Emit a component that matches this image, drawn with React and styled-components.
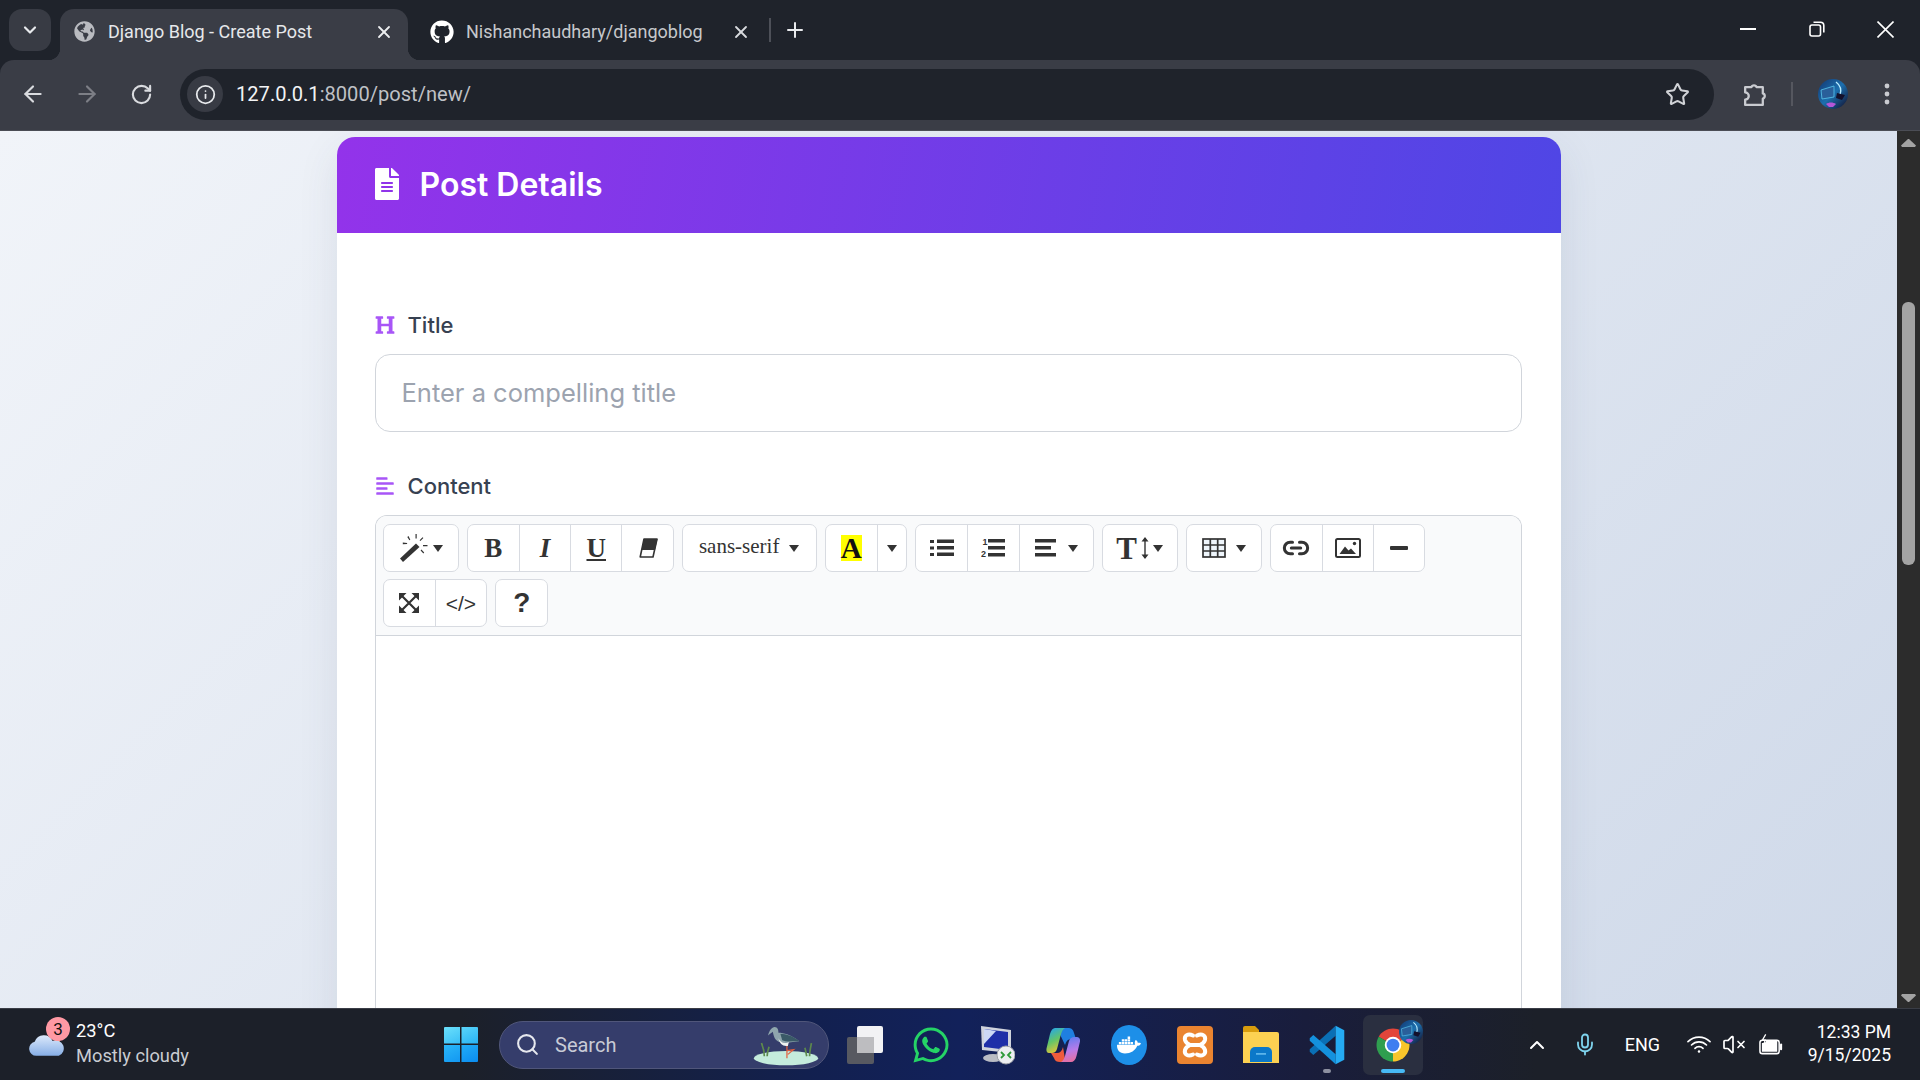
import React from "react";
import styled, { createGlobalStyle } from "styled-components";
import { ArrowLeft, ArrowRight, RotateCw, Star, X, Plus, ChevronDown, ChevronUp, Mic, Info, Search as SearchGlyph, Link2, VolumeX } from "lucide-react";
import { FaFileAlt, FaHeading, FaAlignLeft, FaGithub, FaGlobeAmericas, FaWhatsapp, FaDocker } from "react-icons/fa";

const GlobalStyle = createGlobalStyle`
    html, body {
        margin: 0;
        height: 100%;
        overflow: hidden;
        background: #1f232b;
    }
    * {
        box-sizing: border-box;
    }
`;

const uiFont = `Roboto, "Open Sans", sans-serif`;
const pageFont = `Inter, "Liberation Sans", sans-serif`;

const Screen = styled.div`
    width: 1920px;
    height: 1080px;
    display: flex;
    flex-direction: column;
    overflow: hidden;
    font-family: ${uiFont};
`;

/* browser chrome */
const TabStrip = styled.div`
    height: 60px;
    flex: none;
    display: flex;
    align-items: flex-end;
    background: #1f232b;
    padding-left: 9px;
`;

const TabMenu = styled.div`
    width: 42px;
    height: 42px;
    margin-bottom: 9px;
    margin-right: 9px;
    border-radius: 13px;
    background: #383b44;
    color: #e8eaed;
    display: flex;
    align-items: center;
    justify-content: center;
`;

const Tab = styled.div`
    position: relative;
    width: ${(p) => p.$w}px;
    height: 51px;
    padding: 0 ${(p) => p.$padRight}px 6px ${(p) => p.$pad}px;
    display: flex;
    align-items: center;
    gap: ${(p) => p.$gap}px;
    border-radius: 14px 14px 0 0;
    background: ${(p) => (p.$active ? "#3a3d46" : "transparent")};
    color: ${(p) => (p.$active ? "#e6e8eb" : "#c6c8cc")};
    font-size: 18px;
    white-space: nowrap;

    ${(p) =>
        p.$active &&
        `
        &::before, &::after {
            content: "";
            position: absolute;
            bottom: 0;
            width: 12px;
            height: 12px;
        }
        &::before {
            left: -12px;
            background: radial-gradient(circle at 0 0, transparent 12px, #3a3d46 12.5px);
        }
        &::after {
            right: -12px;
            background: radial-gradient(circle at 100% 0, transparent 12px, #3a3d46 12.5px);
        }
    `}
`;

const TabTitle = styled.span`
    flex: 1;
`;

const TabDivider = styled.div`
    width: 2px;
    height: 24px;
    margin: 0 0 18px 8px;
    background: #4d5058;
`;

const NewTab = styled.div`
    width: 48px;
    height: 42px;
    margin-bottom: 9px;
    color: #e8eaed;
    display: flex;
    align-items: center;
    justify-content: center;
`;

const WindowControls = styled.div`
    margin-left: auto;
    align-self: stretch;
    display: flex;
`;

const WindowButton = styled.div`
    width: 69px;
    height: 58px;
    display: flex;
    align-items: center;
    justify-content: center;
    color: #fff;
`;

const NavBar = styled.div`
    height: 71px;
    flex: none;
    display: flex;
    align-items: center;
    padding: 0 11px 2px 6px;
    background: #3a3d46;
    border-bottom: 1px solid #4b4d55;
    border-radius: 14px 14px 0 0;
`;

const NavButton = styled.div`
    width: 54px;
    height: 44px;
    display: flex;
    align-items: center;
    justify-content: center;
    color: ${(p) => (p.$muted ? "#7d7f86" : "#d9dbdf")};
`;

const Omnibox = styled.div`
    flex: 1;
    height: 51px;
    margin-left: 12px;
    padding: 0 24px 0 7px;
    border-radius: 26px;
    background: #1f232b;
    display: flex;
    align-items: center;
    gap: 13px;
    color: #bfc1c6;
    font-size: 20.1px;
`;

const InfoChip = styled.div`
    width: 36px;
    height: 36px;
    border-radius: 50%;
    background: #383b44;
    color: #e8eaed;
    display: flex;
    align-items: center;
    justify-content: center;
`;

const Url = styled.div`
    flex: 1;
    b {
        font-weight: 400;
        color: #f2f3f5;
    }
`;

const NavIcon = styled.div`
    width: 44px;
    height: 44px;
    margin-left: ${(p) => p.$ml || 0}px;
    display: flex;
    align-items: center;
    justify-content: center;
    color: #c9cbd0;
`;

const NavDivider = styled.div`
    width: 2px;
    height: 24px;
    margin-left: 15px;
    background: #55575f;
`;

/* page */
const Viewport = styled.div`
    flex: 1;
    min-height: 0;
    display: flex;
`;

const Page = styled.main`
    flex: 1;
    min-width: 0;
    overflow: hidden;
    padding-top: 6px;
    background: linear-gradient(135deg, #f1f4f9 0%, #cfd9e9 100%);
    font-family: ${pageFont};
`;

const Card = styled.section`
    width: 1224px;
    margin: 0 auto;
    background: #fff;
    border-radius: 18px 18px 0 0;
    box-shadow: 0 14px 40px rgba(60, 70, 100, 0.1);
`;

const CardHeader = styled.header`
    height: 96px;
    padding: 0 38px 2px;
    display: flex;
    align-items: center;
    gap: 21px;
    border-radius: 18px 18px 0 0;
    background: linear-gradient(100deg, #9333ea 0%, #4f46e5 100%);
    color: #fff;
    svg {
        width: 24px;
        height: 32px;
    }
`;

const CardTitle = styled.h2`
    margin: 0;
    font-size: 32px;
    font-weight: 600;
`;

const CardBody = styled.div`
    padding: 76px 39px 0 38px;
`;

const Field = styled.div`
    margin-bottom: 38px;
`;

const Label = styled.label`
    height: 32px;
    margin-bottom: 13px;
    display: flex;
    align-items: center;
    gap: 13px;
    font-size: 22px;
    font-weight: 500;
    color: #374151;
    svg {
        color: #a855f7;
        width: 20px;
        flex: none;
    }
`;

const TitleInput = styled.input`
    width: 100%;
    height: 78px;
    padding: 0 26px 1px;
    border: 1.5px solid #d1d5db;
    border-radius: 15px;
    font-family: inherit;
    font-size: 25.5px;
    color: #374151;
    outline: none;
    &::placeholder {
        color: #9ca3af;
    }
`;

const Editor = styled.div`
    border: 1.5px solid #d1d5db;
    border-bottom: 0;
    border-radius: 12px 12px 0 0;
    overflow: hidden;
`;

const EditorToolbar = styled.div`
    padding: 8px 8px 8px 7px;
    display: flex;
    flex-wrap: wrap;
    gap: 7px 8px;
    background: #f9fafb;
    border-bottom: 1.5px solid #d1d5db;
`;

const BtnGroup = styled.div`
    height: 48px;
    display: flex;
    background: #fff;
    border: 1.5px solid #d8dbe1;
    border-radius: 7px;
    overflow: hidden;
`;

const Btn = styled.div`
    width: ${(p) => p.$w || 51.3}px;
    height: 100%;
    display: flex;
    align-items: center;
    justify-content: center;
    gap: ${(p) => p.$gap || 0}px;
    color: #333;
    font-family: "Liberation Serif", serif;
    & + & {
        border-left: 1.5px solid #d8dbe1;
    }
`;

const Caret = styled.span`
    width: 0;
    height: 0;
    border-left: 5px solid transparent;
    border-right: 5px solid transparent;
    border-top: 7px solid #333;
`;

const Glyph = styled.span`
    font-family: ${(p) => (p.$sans ? '"Liberation Sans", sans-serif' : '"Liberation Serif", serif')};
    font-size: ${(p) => p.$size || 27}px;
    font-weight: ${(p) => (p.$thin ? 400 : 700)};
    font-style: ${(p) => (p.$italic ? "italic" : "normal")};
    text-decoration: ${(p) => (p.$under ? "underline" : "none")};
    text-decoration-thickness: 2px;
    text-underline-offset: 2px;
    line-height: 1;
    color: #333;
`;

const FontName = styled.span`
    font-size: 21px;
    margin-top: -4px;
`;

const HighlightA = styled.span`
    width: 21px;
    height: 26px;
    background: #ff0;
    color: #111;
    font-family: "Liberation Serif", serif;
    font-weight: 700;
    font-size: 29px;
    line-height: 26px;
    text-align: center;
`;

const EditorBody = styled.div`
    height: 700px;
    background: #fff;
`;

/* scrollbar */
const ScrollTrack = styled.div`
    width: 23px;
    flex: none;
    padding-top: 8px;
    padding-bottom: 6px;
    display: flex;
    flex-direction: column;
    align-items: center;
    background: #2c2c2c;
`;

const ScrollThumb = styled.div`
    width: 13px;
    height: 263px;
    margin-top: 155px;
    margin-bottom: auto;
    border-radius: 6px;
    background: #a3a3a3;
`;

/* taskbar */
const Taskbar = styled.footer`
    height: 72px;
    flex: none;
    display: flex;
    align-items: center;
    padding-right: 29px;
    border-top: 1px solid #3a3d46;
    background: linear-gradient(90deg, #1c2029 0%, #1c2029 24%, #12204f 42%, #12215a 50%, #191d3c 68%, #1c2029 80%, #1c2029 100%);
    color: #fff;
`;

const Weather = styled.div`
    position: relative;
    width: 444px;
    flex: none;
    padding: 0 0 2px 28px;
    display: flex;
    align-items: center;
    gap: 10px;
`;

const WeatherBadge = styled.span`
    position: absolute;
    left: 46px;
    top: -3px;
    width: 24px;
    height: 24px;
    border-radius: 50%;
    background: #ff99a4;
    color: #111;
    font-size: 17px;
    line-height: 24px;
    text-align: center;
`;

const WeatherText = styled.div`
    display: flex;
    flex-direction: column;
    gap: 3px;
    font-size: 18.3px;
    line-height: 22px;
`;

const WeatherNote = styled.span`
    color: #c9ccd2;
`;

const StartButton = styled.div`
    width: 34px;
    margin-right: 21px;
    flex: none;
    display: flex;
`;

const SearchBox = styled.div`
    position: relative;
    width: 330px;
    height: 48px;
    margin-right: 3px;
    flex: none;
    padding-left: 15px;
    display: flex;
    align-items: center;
    gap: 15px;
    border-radius: 24px;
    border: 1px solid #50567a;
    background: #353d6b;
    color: #c8cbd6;
    font-size: 20px;
`;

const SearchBird = styled.div`
    position: absolute;
    right: 9px;
    top: 0;
    display: flex;
`;

const Dock = styled.div`
    display: flex;
`;

const DockItem = styled.div`
    position: relative;
    width: 66px;
    height: 60px;
    display: flex;
    align-items: center;
    justify-content: center;

    ${(p) =>
        p.$active &&
        `
        &::before {
            content: "";
            position: absolute;
            inset: 0 3px;
            border-radius: 7px;
            background: #2a2f40;
        }
        &::after {
            content: "";
            position: absolute;
            left: 21px;
            bottom: 2px;
            width: 24px;
            height: 4px;
            border-radius: 2px;
            background: #47b9f5;
        }
    `}
    ${(p) =>
        p.$open &&
        `
        &::after {
            content: "";
            position: absolute;
            left: 29px;
            bottom: 2px;
            width: 8px;
            height: 4px;
            border-radius: 2px;
            background: #8d90a0;
        }
    `}
    > * {
        position: relative;
    }
`;

const DockAvatar = styled.div`
    position: absolute !important;
    right: 3px;
    top: 5px;
    display: flex;
`;

const DockerBadge = styled.div`
    width: 36px;
    height: 40px;
    border-radius: 50%;
    background: #1d8fe8;
    color: #fff;
    display: flex;
    align-items: center;
    justify-content: center;
`;

const XamppTile = styled.div`
    width: 36px;
    height: 38px;
    border-radius: 4px;
    background: #ea8430;
    display: flex;
    align-items: center;
    justify-content: center;
`;

const Tray = styled.div`
    margin-left: auto;
    display: flex;
    align-items: center;
`;

const TrayIcon = styled.div`
    width: 24px;
    height: 24px;
    margin-right: ${(p) => p.$mr}px;
    display: flex;
    align-items: center;
    justify-content: center;
    color: ${(p) => p.$color || "#fff"};
`;

const TrayLabel = styled.div`
    width: 36px;
    margin-right: 26px;
    font-size: 18px;
    white-space: nowrap;
`;

const Clock = styled.div`
    display: flex;
    flex-direction: column;
    align-items: flex-end;
    font-size: 17.5px;
    line-height: 23px;
    margin-top: -1px;
`;

function ArrowUpDown({ down }) {
    return (
        <svg width="15" height="8" viewBox="0 0 15 8" fill="#a3a3a3">
            <path d={down ? "M0 1.5 1 0H14l1 1.5L8 8H7Z" : "M0 6.5 1 8H14l1-1.5L8 0H7Z"} />
        </svg>
    );
}

function Restore() {
    return (
        <svg width="16" height="16" viewBox="0 0 16 16" fill="none" stroke="#fff" strokeWidth="1.6">
            <rect x="1" y="4" width="10.5" height="11" rx="2" />
            <path d="M4.5 1.2h7a3.3 3.3 0 0 1 3.3 3.3v7" />
        </svg>
    );
}

function Puzzle() {
    return (
        <svg width="27" height="27" viewBox="0 0 26 26" fill="none" stroke="currentColor" strokeWidth="2.2">
            <path d="M4 6h6a2.6 2.6 0 0 1 5 0h6v6a2.6 2.6 0 0 1 0 5v6H4v-5a3.4 3.4 0 0 0 0-7Z" strokeLinejoin="round" />
        </svg>
    );
}

function Dots() {
    return (
        <svg width="6" height="24" viewBox="0 0 6 24" fill="#c9cbd0">
            <circle cx="3" cy="4" r="2.4" />
            <circle cx="3" cy="12" r="2.4" />
            <circle cx="3" cy="20" r="2.4" />
        </svg>
    );
}

function Avatar({ size, id }) {
    return (
        <svg width={size} height={size} viewBox="0 0 30 30">
            <defs>
                <linearGradient id={id} x1="0" y1="0" x2="1" y2="1">
                    <stop offset="0" stopColor="#12356f" />
                    <stop offset="0.5" stopColor="#1c6fae" />
                    <stop offset="1" stopColor="#120c28" />
                </linearGradient>
            </defs>
            <circle cx="15" cy="15" r="15" fill={`url(#${id})`} />
            <path d="M3 11 16 7v11L4 20Z" fill="#2a5f9a" stroke="#5cc8ee" strokeWidth="0.8" />
            <path d="M18 3c4 3 6 7 4 13" stroke="#b9ecff" strokeWidth="1.4" fill="none" />
            <path d="M19 14l8 2-3 5-6-2Z" fill="#14102b" />
            <path d="M8 25c3-2 7-2 10 0l-3 3h-4Z" fill="#b457d8" />
        </svg>
    );
}

function Wand() {
    return (
        <svg width="30" height="28" viewBox="0 0 30 28" fill="#333">
            <path d="M1 24.5 17 9.5l3.500 3.500L4 28Z" />
            <path d="M9.500 2l1.800 3.800-.9.500L8.300 3ZM16.500 0h1.200v4.600h-1.200ZM3.800 8.600l4.300.3v1.100l-4.300.2ZM23.500 3.200l.9.800-3 3-.8-.8ZM24 11h4.500v1.200H24ZM21.600 16.400l.8-.8 2.800 3-.8.800Z" />
        </svg>
    );
}

function Eraser() {
    return (
        <svg width="20" height="20" viewBox="0 0 20 20">
            <path d="M6 1h13l-4 18H2.200Z" fill="#fff" stroke="#333" strokeWidth="1.6" strokeLinejoin="round" />
            <path d="M6 1h13.500l-2.500 11H3.500Z" fill="#333" />
        </svg>
    );
}

function BulletList() {
    return (
        <svg width="24" height="20" viewBox="0 0 24 20" fill="#333">
            <path d="M0 2h4v3H0ZM7 1.500h17v3.500H7ZM0 8.500h4v3H0ZM7 8h17v3.500H7ZM0 15h4v3H0ZM7 14.500h17V18H7Z" />
        </svg>
    );
}

function NumberList() {
    return (
        <svg width="24" height="22" viewBox="0 0 24 22" fill="#333">
            <text x="1.500" y="8" fontFamily="Liberation Sans" fontSize="9" fontWeight="700">1</text>
            <text x="0" y="20" fontFamily="Liberation Sans" fontSize="9" fontWeight="700">2</text>
            <path d="M7 2h17v3.500H7ZM7 9h17v3.500H7ZM7 16h17v3.500H7Z" />
        </svg>
    );
}

function AlignBars() {
    return (
        <svg width="22" height="18" viewBox="0 0 22 18" fill="#333">
            <path d="M0 0h21v3.400H0ZM0 7h16v3.400H0ZM0 14h21v3.400H0Z" />
        </svg>
    );
}

function UpDownArrow() {
    return (
        <svg width="8" height="22" viewBox="0 0 8 22" fill="#333" stroke="#333">
            <path d="M4 2v18" strokeWidth="1.4" />
            <path d="M4 0 7.500 4.500H.500ZM4 22 .500 17.500h7Z" stroke="none" />
        </svg>
    );
}

function TableGrid() {
    return (
        <svg width="24" height="20" viewBox="0 0 24 20" fill="#eef5fb" stroke="#333" strokeWidth="1.7">
            <rect x="1" y="1" width="22" height="18" />
            <path d="M8.300 1v18M15.700 1v18M1 7h22M1 13h22" fill="none" />
        </svg>
    );
}

function Picture() {
    return (
        <svg width="26" height="20" viewBox="0 0 26 20">
            <rect x="1" y="1" width="24" height="18" rx="1.500" fill="#fff" stroke="#333" strokeWidth="2" />
            <path d="M4.500 16 10 8.500l3.500 4 2.500-2 5 5.500Z" fill="#333" />
            <circle cx="19.500" cy="5.500" r="1.700" fill="#333" />
        </svg>
    );
}

function Fullscreen() {
    return (
        <svg width="20" height="20" viewBox="0 0 20 20" fill="#333" stroke="#333">
            <path d="M3 3 17 17M17 3 3 17" strokeWidth="2.200" fill="none" />
            <path d="M0 0h7.500L0 7.500ZM20 0v7.500L12.500 0ZM0 20v-7.500L7.500 20ZM20 20h-7.500l7.500-7.500Z" stroke="none" />
        </svg>
    );
}

function Cloud() {
    return (
        <svg width="38" height="27" viewBox="0 0 37 26">
            <defs>
                <linearGradient id="cloudFill" x1="0" y1="0" x2="0" y2="1">
                    <stop offset="0" stopColor="#dce9fb" />
                    <stop offset="1" stopColor="#86aee6" />
                </linearGradient>
            </defs>
            <path d="M26 4h5v8h-5Z" fill="#f08a1d" />
            <path d="M8 25a7 7 0 0 1-1.500-13.800A9.500 9.500 0 0 1 24 10.500 7.500 7.500 0 0 1 30 25Z" fill="url(#cloudFill)" />
        </svg>
    );
}

function WindowsLogo() {
    return (
        <svg width="34" height="35" viewBox="0 0 34 35">
            <defs>
                <linearGradient id="winTop" x1="0" y1="0" x2="1" y2="1">
                    <stop offset="0" stopColor="#6be0fb" />
                    <stop offset="1" stopColor="#28b3f5" />
                </linearGradient>
                <linearGradient id="winBottom" x1="0" y1="0" x2="1" y2="1">
                    <stop offset="0" stopColor="#2ab7f8" />
                    <stop offset="1" stopColor="#0a8cf0" />
                </linearGradient>
            </defs>
            <path d="M1 0h15v16.500H0V1a1 1 0 0 1 1-1ZM17.500 0H33a1 1 0 0 1 1 1v15.500H17.500Z" fill="url(#winTop)" />
            <path d="M0 18h16v17H1a1 1 0 0 1-1-1ZM17.500 18H34v16a1 1 0 0 1-1 1H17.500Z" fill="url(#winBottom)" />
        </svg>
    );
}

function Bird() {
    return (
        <svg width="66" height="44" viewBox="0 0 70 46">
            <ellipse cx="35" cy="38" rx="34" ry="7.500" fill="#c5ecdc" />
            <path d="M12 36c0-5-1-9-3-14M15 36c0-4 1-7 2-10M60 36c0-5 1-9 2-14M57 36c-1-4-1-6-2-9" stroke="#5d8a4c" strokeWidth="1.800" fill="none" />
            <path d="M36 38V24M36 30l7-1-6 5" stroke="#e2603f" strokeWidth="1.300" fill="none" />
            <path d="M16 14c1-5 4-9 7-9 3 0 4 3 4 6 5 0 14 2 22 9-9 1-17 3-21 1-5-2-6-6-7-11-1 1-3 2-5 4Z" fill="#8fa6ad" />
            <path d="M29 12c6 0 15 3 20 8-7 0-14 1-18-1Z" fill="#3a5a67" />
            <path d="M27 17c2 5 7 6 11 4l-1 4c-5 1-9-2-10-8Z" fill="#eef2f0" />
        </svg>
    );
}

function TaskView() {
    return (
        <svg width="36" height="38" viewBox="0 0 36 38">
            <rect x="10" y="0" width="26" height="27" rx="2" fill="#f2f2f4" />
            <rect x="0" y="11" width="27" height="27" rx="2" fill="#5d5e63" fillOpacity="0.92" />
            <rect x="10" y="11" width="17" height="16" fill="#bdbdc0" />
        </svg>
    );
}

function RemoteDesktop() {
    return (
        <svg width="36" height="42" viewBox="0 0 36 42">
            <path d="M2 2 32 6v23L3 26Z" fill="#cfd3dc" />
            <path d="M5 5 29 8v18L5 23Z" fill="#1f2fa8" />
            <path d="M5 5 17 7 5 20Z" fill="#cdd9f5" />
            <ellipse cx="14" cy="34" rx="10" ry="4" fill="#b9bcc4" />
            <circle cx="27" cy="31" r="9" fill="#eceef1" stroke="#9ea1a8" />
            <path d="M22 28l3 3-3 3M32 28l-3 3 3 3" stroke="#2f9a3a" strokeWidth="1.800" fill="none" />
        </svg>
    );
}

function Copilot() {
    return (
        <svg width="34" height="36" viewBox="0 0 34 36">
            <defs>
                <linearGradient id="copA" x1="0.2" y1="0" x2="0.6" y2="1">
                    <stop offset="0" stopColor="#24a6ee" />
                    <stop offset="0.5" stopColor="#62c46a" />
                    <stop offset="1" stopColor="#f4c531" />
                </linearGradient>
                <linearGradient id="copB" x1="0.4" y1="0" x2="0.6" y2="1">
                    <stop offset="0" stopColor="#5f7cf0" />
                    <stop offset="0.55" stopColor="#b97be8" />
                    <stop offset="1" stopColor="#e86f9e" />
                </linearGradient>
            </defs>
            <path d="M11 1h11c3 0 5 1 6 5l2 6h-5c-3 0-5 2-6 6Z" fill="#1f7fe0" />
            <path d="M5 26h6c3 0 5-2 6-6l2 12 0 3h-5c-3 0-5-1-6-4Z" fill="#ee5b3c" />
            <path d="M9 1h10c-2 1-3 3-4 6l-4 15c-1 3-3 4-5 4H3c-2 0-3-2-2.500-4.500L4 7c1-4 3-6 5-6Z" fill="url(#copA)" />
            <path d="M25 35H15c2-1 3-3 4-6l4-15c1-3 3-4 5-4h3c2 0 3.500 2 3 4.500L30.500 29c-1 4-3 6-5.500 6Z" fill="url(#copB)" />
        </svg>
    );
}

function XamppMark() {
    return (
        <svg width="30" height="30" viewBox="0 0 30 30" fill="none" stroke="#fff" strokeWidth="4" strokeLinecap="round">
            <path d="M13 5.500C8 3 4 5.500 5 10c.5 2 3 4 5 5-2 1-4.500 3-5 5-1 4.500 3 7 8 4.500" />
            <path d="M17 5.500c5-2.500 9 0 8 4.500-.5 2-3 4-5 5 2 1 4.500 3 5 5 1 4.500-3 7-8 4.500" />
            <path d="M11 15h8" />
        </svg>
    );
}

function Folder() {
    return (
        <svg width="36" height="37" viewBox="0 0 36 37">
            <path d="M0 2a2 2 0 0 1 2-2h10l4 4v6H0Z" fill="#d89c0d" />
            <path d="M0 6h34a2 2 0 0 1 2 2v29H0Z" fill="#fcd152" />
            <path d="M7 36V26a5 5 0 0 1 5-5h12a5 5 0 0 1 5 5v10Z" fill="#0b78c9" />
            <path d="M13 27h10v1.800H13Z" fill="#5bb4ea" />
        </svg>
    );
}

function VsCode() {
    return (
        <svg width="36" height="42" viewBox="0 0 100 100" preserveAspectRatio="none">
            <polygon points="74,4 74,28 12,74 2,66 2,60" fill="#0a6fb5" />
            <polygon points="74,96 74,72 12,26 2,34 2,40" fill="#1491dd" />
            <polygon points="74,4 98,15 98,85 74,96" fill="#25abf3" />
        </svg>
    );
}

function ChromeIcon() {
    return (
        <svg width="36" height="36" viewBox="0 0 48 48">
            <path d="M24 24 4.950 13A22 22 0 0 1 43.050 13Z" fill="#e2453a" />
            <path d="M24 24 43.050 13A22 22 0 0 1 24 46Z" fill="#f8c52b" />
            <path d="M24 24 24 46A22 22 0 0 1 4.950 13Z" fill="#2f9e4f" />
            <circle cx="24" cy="24" r="11" fill="#fff" />
            <circle cx="24" cy="24" r="8.500" fill="#3f7ef0" />
        </svg>
    );
}

function WifiIcon() {
    return (
        <svg width="25" height="19" viewBox="0 0 25 19" fill="none" stroke="#fff" strokeWidth="1.700" strokeLinecap="round">
            <path d="M1 6.500a16.500 16.500 0 0 1 23 0M4.700 10a11 11 0 0 1 15.600 0M8.300 13.500a5.800 5.800 0 0 1 8.400 0" />
            <circle cx="12.500" cy="16.800" r="1.300" fill="#fff" stroke="none" />
        </svg>
    );
}

function Battery() {
    return (
        <svg width="25" height="21" viewBox="0 0 25 21" fill="none" stroke="#fff" strokeWidth="1.600">
            <rect x="1" y="6" width="20" height="14" rx="2.500" />
            <path d="M3 18V9h3l2-3h11v12Z" fill="#fff" stroke="none" />
            <path d="M23 10.500v5" strokeWidth="2.200" strokeLinecap="round" />
            <path d="M7 0 3.500 6h3L5 10" stroke="#fff" strokeWidth="1.300" />
        </svg>
    );
}

export default function App() {
    return (
        <Screen>
            <GlobalStyle />
            <TabStrip>
                <TabMenu>
                    <ChevronDown size={20} strokeWidth={2.6} />
                </TabMenu>
                <Tab $active $w={348} $pad={14} $padRight={14} $gap={13}>
                    <FaGlobeAmericas size={21} color="#b9bbc0" />
                    <TabTitle>Django Blog - Create Post</TabTitle>
                    <X size={20} strokeWidth={2.2} color="#eceef0" />
                </Tab>
                <Tab $w={353} $pad={22} $padRight={10} $gap={12}>
                    <FaGithub size={24} color="#fff" />
                    <TabTitle>Nishanchaudhary/djangoblog</TabTitle>
                    <X size={20} strokeWidth={2.2} color="#d8dade" />
                </Tab>
                <TabDivider />
                <NewTab>
                    <Plus size={24} strokeWidth={2} />
                </NewTab>
                <WindowControls>
                    <WindowButton>
                        <svg width="16" height="2" viewBox="0 0 16 2"><path d="M0 0h16v2H0Z" fill="#fff" /></svg>
                    </WindowButton>
                    <WindowButton>
                        <Restore />
                    </WindowButton>
                    <WindowButton>
                        <svg width="17" height="17" viewBox="0 0 17 17" stroke="#fff" strokeWidth="1.600"><path d="M.5.500l16 16M16.500.500l-16 16" /></svg>
                    </WindowButton>
                </WindowControls>
            </TabStrip>
            <NavBar>
                <NavButton><ArrowLeft size={26} strokeWidth={2} /></NavButton>
                <NavButton $muted><ArrowRight size={26} strokeWidth={2} /></NavButton>
                <NavButton><RotateCw size={23} strokeWidth={2.2} /></NavButton>
                <Omnibox>
                    <InfoChip><Info size={21} strokeWidth={2} /></InfoChip>
                    <Url><b>127.0.0.1</b>:8000/post/new/</Url>
                    <Star size={25} strokeWidth={2} color="#d0d2d6" />
                </Omnibox>
                <NavIcon $ml={18}><Puzzle /></NavIcon>
                <NavDivider />
                <NavIcon $ml={18}><Avatar size={30} id="avatarNav" /></NavIcon>
                <NavIcon $ml={10}><Dots /></NavIcon>
            </NavBar>
            <Viewport>
                <Page>
                    <Card>
                        <CardHeader>
                            <FaFileAlt />
                            <CardTitle>Post Details</CardTitle>
                        </CardHeader>
                        <CardBody>
                            <Field>
                                <Label><FaHeading size={20} />Title</Label>
                                <TitleInput placeholder="Enter a compelling title" />
                            </Field>
                            <Field>
                                <Label><FaAlignLeft size={20} />Content</Label>
                                <Editor>
                                    <EditorToolbar>
                                        <BtnGroup>
                                            <Btn $w={74} $gap={4}><Wand /><Caret /></Btn>
                                        </BtnGroup>
                                        <BtnGroup>
                                            <Btn><Glyph>B</Glyph></Btn>
                                            <Btn><Glyph $italic>I</Glyph></Btn>
                                            <Btn><Glyph $under>U</Glyph></Btn>
                                            <Btn><Eraser /></Btn>
                                        </BtnGroup>
                                        <BtnGroup>
                                            <Btn $w={133} $gap={10}><FontName>sans-serif</FontName><Caret /></Btn>
                                        </BtnGroup>
                                        <BtnGroup>
                                            <Btn><HighlightA>A</HighlightA></Btn>
                                            <Btn $w={29}><Caret /></Btn>
                                        </BtnGroup>
                                        <BtnGroup>
                                            <Btn><BulletList /></Btn>
                                            <Btn><NumberList /></Btn>
                                            <Btn $w={74} $gap={11}><AlignBars /><Caret /></Btn>
                                        </BtnGroup>
                                        <BtnGroup>
                                            <Btn $w={74} $gap={4}><Glyph $size={31}>T</Glyph><UpDownArrow /><Caret /></Btn>
                                        </BtnGroup>
                                        <BtnGroup>
                                            <Btn $w={74} $gap={10}><TableGrid /><Caret /></Btn>
                                        </BtnGroup>
                                        <BtnGroup>
                                            <Btn><Link2 size={28} strokeWidth={2.6} color="#333" /></Btn>
                                            <Btn><Picture /></Btn>
                                            <Btn>
                                                <svg width="18" height="4" viewBox="0 0 18 4"><rect width="18" height="4" rx="1" fill="#333" /></svg>
                                            </Btn>
                                        </BtnGroup>
                                        <BtnGroup>
                                            <Btn><Fullscreen /></Btn>
                                            <Btn><Glyph $sans $thin $size={21}>&lt;/&gt;</Glyph></Btn>
                                        </BtnGroup>
                                        <BtnGroup>
                                            <Btn><Glyph $sans $size={28}>?</Glyph></Btn>
                                        </BtnGroup>
                                    </EditorToolbar>
                                    <EditorBody />
                                </Editor>
                            </Field>
                        </CardBody>
                    </Card>
                </Page>
                <ScrollTrack>
                    <ArrowUpDown />
                    <ScrollThumb />
                    <ArrowUpDown down />
                </ScrollTrack>
            </Viewport>
            <Taskbar>
                <Weather>
                    <Cloud />
                    <WeatherBadge>3</WeatherBadge>
                    <WeatherText>
                        <span>23°C</span>
                        <WeatherNote>Mostly cloudy</WeatherNote>
                    </WeatherText>
                </Weather>
                <StartButton><WindowsLogo /></StartButton>
                <SearchBox>
                    <SearchGlyph size={25} strokeWidth={2} color="#e6e8ee" />
                    Search
                    <SearchBird><Bird /></SearchBird>
                </SearchBox>
                <Dock>
                    <DockItem><TaskView /></DockItem>
                    <DockItem><FaWhatsapp size={40} color="#25d366" /></DockItem>
                    <DockItem><RemoteDesktop /></DockItem>
                    <DockItem><Copilot /></DockItem>
                    <DockItem><DockerBadge><FaDocker size={24} /></DockerBadge></DockItem>
                    <DockItem><XamppTile><XamppMark /></XamppTile></DockItem>
                    <DockItem><Folder /></DockItem>
                    <DockItem $open><VsCode /></DockItem>
                    <DockItem $active>
                        <ChromeIcon />
                        <DockAvatar><Avatar size={24} id="avatarDock" /></DockAvatar>
                    </DockItem>
                </Dock>
                <Tray>
                    <TrayIcon $mr={24}><ChevronUp size={26} strokeWidth={2} /></TrayIcon>
                    <TrayIcon $mr={28} $color="#7fd4ee"><Mic size={25} strokeWidth={1.8} /></TrayIcon>
                    <TrayLabel>ENG</TrayLabel>
                    <TrayIcon $mr={11}><WifiIcon /></TrayIcon>
                    <TrayIcon $mr={13}><VolumeX size={25} strokeWidth={1.7} /></TrayIcon>
                    <TrayIcon $mr={25}><Battery /></TrayIcon>
                    <Clock>
                        <span>12:33 PM</span>
                        <span>9/15/2025</span>
                    </Clock>
                </Tray>
            </Taskbar>
        </Screen>
    );
}
